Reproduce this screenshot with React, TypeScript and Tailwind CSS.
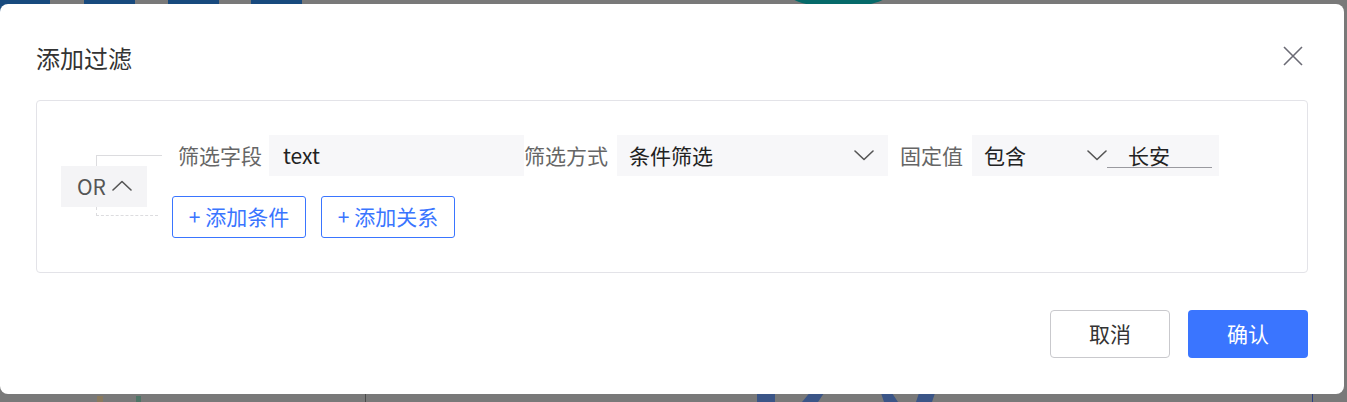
const font = { fontFamily: '"Noto Sans CJK SC", "Noto Sans", sans-serif' }

function Chevron({ up = false, className = '' }: { up?: boolean; className?: string }) {
  return (
    <svg className={className} width="20" height="11" viewBox="0 0 20 11" fill="none">
      <path
        d={up ? 'M1 10L10 1.5L19 10' : 'M1 1L10 9.5L19 1'}
        stroke="currentColor"
        strokeWidth="1.6"
        strokeLinecap="round"
        strokeLinejoin="round"
      />
    </svg>
  )
}

function Backdrop() {
  // what peeks out around the dialog: the page behind the overlay
  return (
    <>
      <div className="absolute left-0 top-0 h-[20px] w-[50px] bg-[#184a7e]" />
      <div className="absolute left-[84px] top-0 h-[20px] w-[51px] bg-[#184a7e]" />
      <div className="absolute left-[168px] top-0 h-[20px] w-[51px] bg-[#184a7e]" />
      <div className="absolute left-[251px] top-0 h-[20px] w-[51px] bg-[#184a7e]" />
      <div className="absolute left-[770px] top-[-40px] h-[45px] w-[137px] rounded-b-[60px] bg-[#066a6a]" />
      <div className="absolute bottom-0 left-[365px] h-[12px] w-px bg-[#4b4b4b]" />
      <div className="absolute bottom-0 left-[1312px] h-[12px] w-px bg-[#2c3f82]" />
      <div className="absolute bottom-0 left-[97px] h-[6px] w-[6px] bg-[#8a7a5e]" />
      <div className="absolute bottom-0 left-[136px] h-[6px] w-[5px] bg-[#4f7567]" />
      <svg className="absolute bottom-0 left-[750px]" width="200" height="12" viewBox="0 0 200 12">
        <path d="M7 0h18v12H7z M62 0h14l-8 12H52z M130 0h10l8 12h-14z M170 0h16l-4 12h-16z" fill="#3b5587" />
      </svg>
    </>
  )
}

function FilterRow() {
  return (
    <div className="flex h-[41px] items-center text-[21px]">
      <span className="ml-[6px] mr-[7px] text-[#666]">筛选字段</span>
      <div className="flex h-[41px] w-[255px] items-center bg-[#f7f7f9] pl-[14px] text-[#222]">text</div>
      <span className="mr-[9px] text-[#666]">筛选方式</span>
      <div className="flex h-[41px] w-[271px] items-center justify-between bg-[#f7f7f9] pl-[12px] pr-[14px] text-[#222]">
        <span>条件筛选</span>
        <Chevron className="text-[#555]" />
      </div>
      <span className="ml-[12px] mr-[9px] text-[#666]">固定值</span>
      <div className="flex h-[41px] items-center bg-[#f7f7f9]">
        <div className="flex w-[135px] items-center justify-between pl-[12px] text-[#222]">
          <span>包含</span>
          <Chevron className="text-[#555]" />
        </div>
        <div className="relative flex h-[41px] w-[112px] items-center pl-[21px] text-[#222]">
          长安
          <div className="absolute bottom-[8px] left-0 h-px w-[105px] bg-[#9a9aa0]" />
        </div>
      </div>
    </div>
  )
}

export default function App() {
  return (
    <div className="relative h-[402px] w-[1347px] overflow-hidden bg-[#797979]" style={font}>
      <Backdrop />
      <div className="relative z-10 pt-[4px]">
        <div className="flex h-[390px] w-[1344px] flex-col rounded-[8px] bg-white">
          <div className="mt-[36px] flex h-[36px] items-center justify-between pl-[36px] pr-[41px]">
            <h2 className="text-[24px] leading-[36px] text-[#333]">添加过滤</h2>
            <svg className="mb-[4px] text-[#6b6b75]" width="20" height="20" viewBox="0 0 20 20" fill="none">
              <path d="M1 1L19 19M19 1L1 19" stroke="currentColor" strokeWidth="1.6" />
            </svg>
          </div>

          <div className="mx-[36px] mt-[24px] flex h-[173px] items-center rounded-[4px] border border-[#e3e3e8] pl-[24px]">
            <div className="relative">
              <div className="absolute left-[35px] top-[-11px] h-[11px] w-[66px] border-l border-t border-[#dcdcdf]" />
              <div className="absolute left-[35px] top-[41px] h-[9px] w-[62px] border-b border-l border-dashed border-[#dcdcdf]" />
              <div className="flex h-[41px] w-[86px] items-center bg-[#f4f4f6] pl-[16px] text-[21px] text-[#555]">
                <span>OR</span>
                <Chevron up className="ml-[6px] mb-[3px]" />
              </div>
            </div>

            <div className="ml-[25px] flex flex-col gap-[20px]">
              <FilterRow />
              <div className="flex gap-[15px]">
                <button className="h-[42px] w-[134px] rounded-[3px] border border-[#3a75ff] text-[21px] text-[#3a75ff]">
                  + 添加条件
                </button>
                <button className="h-[42px] w-[134px] rounded-[3px] border border-[#3a75ff] text-[21px] text-[#3a75ff]">
                  + 添加关系
                </button>
              </div>
            </div>
          </div>

          <div className="mt-[37px] flex justify-end gap-[18px] pr-[36px]">
            <button className="h-[48px] w-[120px] rounded-[4px] border border-[#c9c9cd] text-[21px] text-[#333]">取消</button>
            <button className="h-[48px] w-[120px] rounded-[4px] bg-[#3a75ff] text-[21px] text-white">确认</button>
          </div>
        </div>
      </div>
    </div>
  )
}
